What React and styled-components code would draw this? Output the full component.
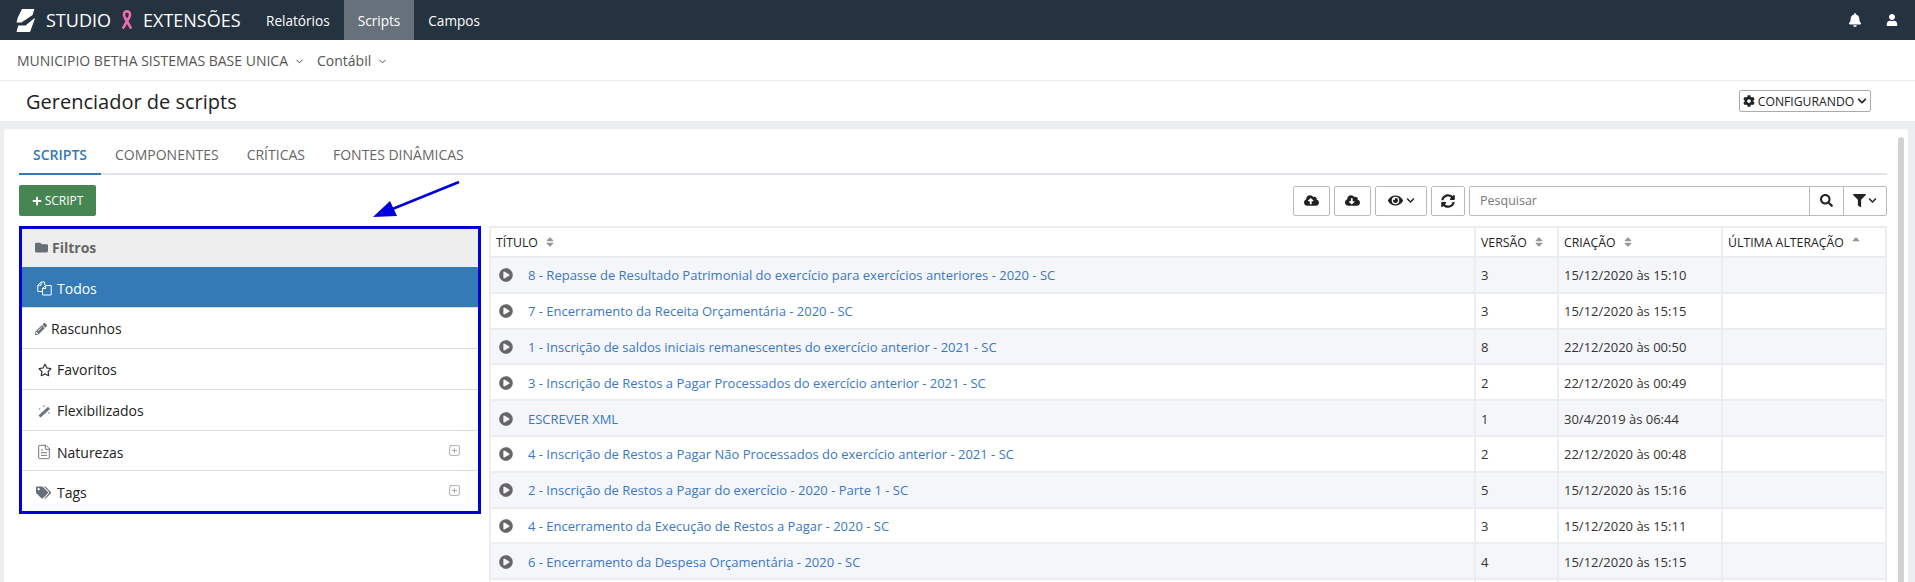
import React from 'react';
import styled, { createGlobalStyle } from 'styled-components';
import {
  FaBell,
  FaUser,
  FaCog,
  FaChevronDown,
  FaPlus,
  FaCloudUploadAlt,
  FaCloudDownloadAlt,
  FaEye,
  FaSyncAlt,
  FaSearch,
  FaFilter,
  FaFolder,
  FaPencilAlt,
  FaRegStar,
  FaTags,
  FaPlayCircle,
  FaSort,
  FaSortUp
} from 'react-icons/fa';
import { ChevronDown, FileText, SquarePlus } from 'lucide-react';

const GlobalStyle = createGlobalStyle`
  html, body {
    margin: 0;
    padding: 0;
    background: #fff;
  }
  body {
    font-family: "Open Sans", "Liberation Sans", sans-serif;
    font-size: 13px;
    color: #333;
  }
  * {
    box-sizing: border-box;
  }
`;

const Page = styled.div`
  position: relative;
  display: flex;
  flex-direction: column;
  height: 582px;
  overflow: hidden;
`;

const Navbar = styled.header`
  display: flex;
  align-items: stretch;
  flex: 0 0 40px;
  background: #253240;
  color: #fff;
`;

const Brand = styled.div`
  display: flex;
  align-items: center;
  width: 252px;
  padding-left: 15px;
  font-size: 18px;
`;

const BrandText = styled.span`
  display: flex;
  margin-left: ${p => p.$left}px;
  margin-top: ${p => p.$top || 0}px;
`;

const NavLink = styled.a`
  display: flex;
  align-items: center;
  padding: 0 14px;
  font-size: 13.6px;
  color: #fff;
  background: ${p => (p.$active ? '#67717b' : 'transparent')};
`;

const NavRight = styled.div`
  display: flex;
  align-items: center;
  gap: 24px;
  margin-left: auto;
  padding-right: 17px;
  font-size: 14px;
`;

const SubBar = styled.div`
  display: flex;
  align-items: center;
  flex: 0 0 41px;
  padding: 0 17px;
  border-bottom: 1px solid #ebedf1;
  font-size: 14px;
  color: #555;
`;

const Context = styled.span`
  display: inline-flex;
  align-items: center;
  gap: 3px;
  margin-right: 12px;
`;

const ContextChevron = styled(ChevronDown)`
  margin-left: 3px;
  margin-top: 3px;
  color: #444;
`;

const TitleBar = styled.div`
  display: flex;
  align-items: center;
  justify-content: space-between;
  flex: 0 0 40px;
  padding: 0 44px 0 26px;
`;

const Title = styled.h1`
  margin: 0;
  font-size: 20px;
  font-weight: 400;
  color: #222;
`;

const ConfigButton = styled.button`
  display: flex;
  align-items: center;
  justify-content: center;
  gap: 3px;
  width: 132px;
  height: 22px;
  padding: 0;
  border: 1px solid #aaa;
  border-radius: 2px;
  background: #fff;
  font-family: inherit;
  font-size: 12.2px;
  color: #222;
`;

const Content = styled.main`
  flex: 1;
  padding: 8px 7px 0 4px;
  background: #ebedf1;
  min-height: 0;
`;

const Panel = styled.section`
  position: relative;
  height: 100%;
  padding: 0 21px 0 15px;
  background: #fff;
  border-radius: 3px 3px 0 0;
  overflow: hidden;
`;

const ScrollThumb = styled.div`
  position: absolute;
  top: 8px;
  right: 4px;
  bottom: 0;
  width: 6px;
  border-radius: 3px 3px 0 0;
  background: #d2d2d2;
`;

const Tabs = styled.nav`
  display: flex;
  height: 46px;
  border-bottom: 2px solid #e2e4e9;
`;

const Tab = styled.a`
  display: flex;
  align-items: center;
  height: 46px;
  padding: 6px 14px 0;
  font-size: 14px;
  font-weight: ${p => (p.$active ? 600 : 400)};
  color: ${p => (p.$active ? '#337ab7' : '#666')};
  border-bottom: 2px solid ${p => (p.$active ? '#337ab7' : 'transparent')};
`;

const Toolbar = styled.div`
  display: flex;
  align-items: center;
  justify-content: space-between;
  margin-top: 10px;
  height: 31px;
`;

const AddButton = styled.button`
  display: flex;
  align-items: center;
  justify-content: center;
  gap: 3px;
  width: 77px;
  height: 31px;
  padding: 0;
  border: 0;
  border-radius: 2px;
  background: #468653;
  color: #fff;
  font-family: inherit;
  font-size: 12px;
`;

const Tools = styled.div`
  display: flex;
  align-items: center;
  gap: 4px;
`;

const ToolButton = styled.button`
  display: flex;
  align-items: center;
  justify-content: center;
  gap: 3px;
  width: ${p => p.$width}px;
  height: 30px;
  padding: 0;
  border: 1px solid #bbb;
  border-radius: 2px;
  background: #fff;
  color: #222;
  font-size: 15px;
`;

const SearchGroup = styled.div`
  display: flex;
  width: 418px;
  height: 30px;
  border: 1px solid #bbb;
  border-radius: 2px;
`;

const SearchInput = styled.div`
  flex: 1;
  display: flex;
  align-items: center;
  padding-left: 10px;
  font-size: 12.5px;
  color: #777;
`;

const SearchAddon = styled.span`
  display: flex;
  align-items: center;
  justify-content: center;
  gap: 2px;
  width: ${p => p.$width}px;
  border-left: 1px solid #bbb;
  color: #222;
  font-size: 14px;
`;

const Body = styled.div`
  display: flex;
  align-items: flex-start;
  gap: 8px;
  margin-top: 10px;
`;

const FilterBox = styled.aside`
  flex: 0 0 462px;
  border: 3px solid #0000dd;
`;

const FilterHead = styled.div`
  display: flex;
  align-items: center;
  height: 38px;
  padding: 0 0 2px 13px;
  background: #eee;
  font-size: 14px;
  font-weight: 700;
  color: #666;
`;

const FilterItem = styled.div`
  display: flex;
  align-items: center;
  height: ${p => p.$height || 41}px;
  padding: ${p => p.$nudge || 1}px 17px 0 13px;
  font-size: 14px;
  color: ${p => (p.$active ? '#fff' : '#222')};
  background: ${p => (p.$active ? '#337ab7' : '#fff')};
  border-bottom: 1px solid ${p => (p.$last ? 'transparent' : '#ddd')};
`;

const ItemIcon = styled.span`
  display: flex;
  align-items: center;
  flex: 0 0 ${p => p.$slot || 22}px;
  padding-left: ${p => p.$pad || 0}px;
  font-size: ${p => p.$size || 14}px;
  color: ${p => p.$color || '#666e78'};
`;

const Expand = styled.span`
  display: flex;
  margin: -3px 0 0 auto;
  color: #888;
`;

const Table = styled.table`
  flex: 0 0 1396px;
  width: 1396px;
  table-layout: fixed;
  border-collapse: collapse;
`;

const HeadCell = styled.th`
  height: 30px;
  padding: 0 5px;
  border: 2px solid #ebedf1;
  font-size: 12.3px;
  font-weight: 400;
  text-align: left;
  color: #222;
  white-space: nowrap;
`;

const SortIcon = styled.span`
  display: inline-flex;
  margin-left: 6px;
  vertical-align: -1px;
  font-size: 12px;
  color: #999;
`;

const Row = styled.tr`
  height: 35.8px;
  background: ${p => (p.$odd ? '#f5f6fa' : '#fff')};
`;

const Cell = styled.td`
  padding: 1px 5px 0;
  border: 2px solid #ebedf1;
  font-size: 13px;
  color: #333;
  white-space: nowrap;
`;

const TitleCell = styled.div`
  display: flex;
  align-items: center;
  gap: 15px;
  padding-left: 3px;
`;

const PlayIcon = styled(FaPlayCircle)`
  flex: none;
  font-size: 14px;
  color: #666;
`;

const ScriptLink = styled.a`
  color: #3a78c3;
`;

const ArrowLayer = styled.svg`
  position: absolute;
  left: 360px;
  top: 175px;
  pointer-events: none;
`;

const Ribbon = () => (
  <svg width="14" height="20" viewBox="0 0 14 20" fill="none" stroke="#ee6cb1" strokeWidth="2.6">
    <path d="M4.5 7C3.2 4 4.2 1.4 7 1.4S10.8 4 9.5 7L2.8 18.6" />
    <path d="M4.5 7L11.2 18.6" />
  </svg>
);

const Logo = () => (
  <svg width="20" height="23" viewBox="0 0 20 23" fill="#fff">
    <path d="M7 0H19.4L17.6 6L6.5 13.6H1.5L2.8 8.5z" />
    <path d="M19 9.5H20L15 23H1.5L3.2 16.6H10.5z" />
  </svg>
);

const CopyIcon = () => (
  <svg width="15" height="15" viewBox="0 0 15 15" fill="none" stroke="#fff" strokeWidth="1">
    <path d="M5.5 10.5H.8V4.2L4 1h3.7v3M.8 4.2H4V1" />
    <path d="M5.5 14V7.5L8.7 4.5h5.5V14zM5.5 7.5h3.2V4.5" />
  </svg>
);

const WandIcon = () => (
  <svg width="13" height="14" viewBox="0 0 13 14" fill="none">
    <path d="M1.5 12.5L11 3.8" stroke="#6c7380" strokeWidth="3" />
    <path d="M6 .5v3M4.5 2h3M1.5 4v2M.5 5h2M11 8v2M10 9h2" stroke="#a8adb6" strokeWidth=".8" />
  </svg>
);

const scripts = [
  ['8 - Repasse de Resultado Patrimonial do exercício para exercícios anteriores - 2020 - SC', '3', '15/12/2020 às 15:10'],
  ['7 - Encerramento da Receita Orçamentária - 2020 - SC', '3', '15/12/2020 às 15:15'],
  ['1 - Inscrição de saldos iniciais remanescentes do exercício anterior - 2021 - SC', '8', '22/12/2020 às 00:50'],
  ['3 - Inscrição de Restos a Pagar Processados do exercício anterior - 2021 - SC', '2', '22/12/2020 às 00:49'],
  ['ESCREVER XML', '1', '30/4/2019 às 06:44'],
  ['4 - Inscrição de Restos a Pagar Não Processados do exercício anterior - 2021 - SC', '2', '22/12/2020 às 00:48'],
  ['2 - Inscrição de Restos a Pagar do exercício - 2020 - Parte 1 - SC', '5', '15/12/2020 às 15:16'],
  ['4 - Encerramento da Execução de Restos a Pagar - 2020 - SC', '3', '15/12/2020 às 15:11'],
  ['6 - Encerramento da Despesa Orçamentária - 2020 - SC', '4', '15/12/2020 às 15:15']
];

const App = () => (
  <Page>
    <GlobalStyle />
    <Navbar>
      <Brand>
        <Logo />
        <BrandText $left={11}>STUDIO</BrandText>
        <BrandText $left={9}>
          <Ribbon />
        </BrandText>
        <BrandText $left={9} $top={-1}>EXTENSÕES</BrandText>
      </Brand>
      <NavLink>Relatórios</NavLink>
      <NavLink $active>Scripts</NavLink>
      <NavLink>Campos</NavLink>
      <NavRight>
        <FaBell />
        <FaUser size={12} />
      </NavRight>
    </Navbar>

    <SubBar>
      <Context>
        MUNICIPIO BETHA SISTEMAS BASE UNICA <ContextChevron size={11} />
      </Context>
      <Context>
        Contábil <ContextChevron size={11} />
      </Context>
    </SubBar>

    <TitleBar>
      <Title>Gerenciador de scripts</Title>
      <ConfigButton>
        <FaCog size={12} />
        CONFIGURANDO
        <FaChevronDown size={10} />
      </ConfigButton>
    </TitleBar>

    <Content>
      <Panel>
        <ScrollThumb />
        <Tabs>
          <Tab $active>SCRIPTS</Tab>
          <Tab>COMPONENTES</Tab>
          <Tab>CRÍTICAS</Tab>
          <Tab>FONTES DINÂMICAS</Tab>
        </Tabs>

        <Toolbar>
          <AddButton>
            <FaPlus size={10} />
            SCRIPT
          </AddButton>
          <Tools>
            <ToolButton $width={37}><FaCloudUploadAlt /></ToolButton>
            <ToolButton $width={37}><FaCloudDownloadAlt /></ToolButton>
            <ToolButton $width={52}>
              <FaEye />
              <FaChevronDown size={9} />
            </ToolButton>
            <ToolButton $width={34}><FaSyncAlt size={14} /></ToolButton>
            <SearchGroup>
              <SearchInput>Pesquisar</SearchInput>
              <SearchAddon $width={34}><FaSearch size={13} /></SearchAddon>
              <SearchAddon $width={43}>
                <FaFilter size={13} />
                <FaChevronDown size={9} />
              </SearchAddon>
            </SearchGroup>
          </Tools>
        </Toolbar>

        <Body>
          <FilterBox>
            <FilterHead>
              <ItemIcon $slot={17} $size={13}><FaFolder /></ItemIcon>
              Filtros
            </FilterHead>
            <FilterItem $active $nudge={2}>
              <ItemIcon $pad={2} $color="#fff"><CopyIcon /></ItemIcon>
              Todos
            </FilterItem>
            <FilterItem>
              <ItemIcon $slot={16} $size={12}><FaPencilAlt /></ItemIcon>
              Rascunhos
            </FilterItem>
            <FilterItem>
              <ItemIcon $pad={3} $color="#333"><FaRegStar /></ItemIcon>
              Favoritos
            </FilterItem>
            <FilterItem>
              <ItemIcon $pad={3}><WandIcon /></ItemIcon>
              Flexibilizados
            </FilterItem>
            <FilterItem $height={40} $nudge={3}>
              <ItemIcon $pad={1} $color="#555"><FileText size={16} strokeWidth={1.2} /></ItemIcon>
              Naturezas
              <Expand><SquarePlus size={13} strokeWidth={1.2} /></Expand>
            </FilterItem>
            <FilterItem $height={40} $nudge={3} $last>
              <ItemIcon $pad={1} $size={15}><FaTags /></ItemIcon>
              Tags
              <Expand><SquarePlus size={13} strokeWidth={1.2} /></Expand>
            </FilterItem>
          </FilterBox>

          <Table>
            <colgroup>
              <col width="985" />
              <col width="83" />
              <col width="164" />
              <col width="164" />
            </colgroup>
            <thead>
              <tr>
                <HeadCell>TÍTULO<SortIcon><FaSort /></SortIcon></HeadCell>
                <HeadCell>VERSÃO<SortIcon><FaSort /></SortIcon></HeadCell>
                <HeadCell>CRIAÇÃO<SortIcon><FaSort /></SortIcon></HeadCell>
                <HeadCell>ÚLTIMA ALTERAÇÃO<SortIcon><FaSortUp /></SortIcon></HeadCell>
              </tr>
            </thead>
            <tbody>
              {scripts.map(([title, version, created], i) => (
                <Row key={title} $odd={i % 2 === 0}>
                  <Cell>
                    <TitleCell>
                      <PlayIcon />
                      <ScriptLink>{title}</ScriptLink>
                    </TitleCell>
                  </Cell>
                  <Cell>{version}</Cell>
                  <Cell>{created}</Cell>
                  <Cell />
                </Row>
              ))}
              <Row>
                <Cell />
                <Cell />
                <Cell />
                <Cell />
              </Row>
            </tbody>
          </Table>
        </Body>
      </Panel>
    </Content>

    <ArrowLayer width="110" height="50" viewBox="0 0 110 50">
      <path d="M99 7L25 37" stroke="#0000dd" strokeWidth="2.5" fill="none" />
      <path d="M13 42L30 26L37 41z" fill="#0000dd" />
    </ArrowLayer>
  </Page>
);

export default App;
